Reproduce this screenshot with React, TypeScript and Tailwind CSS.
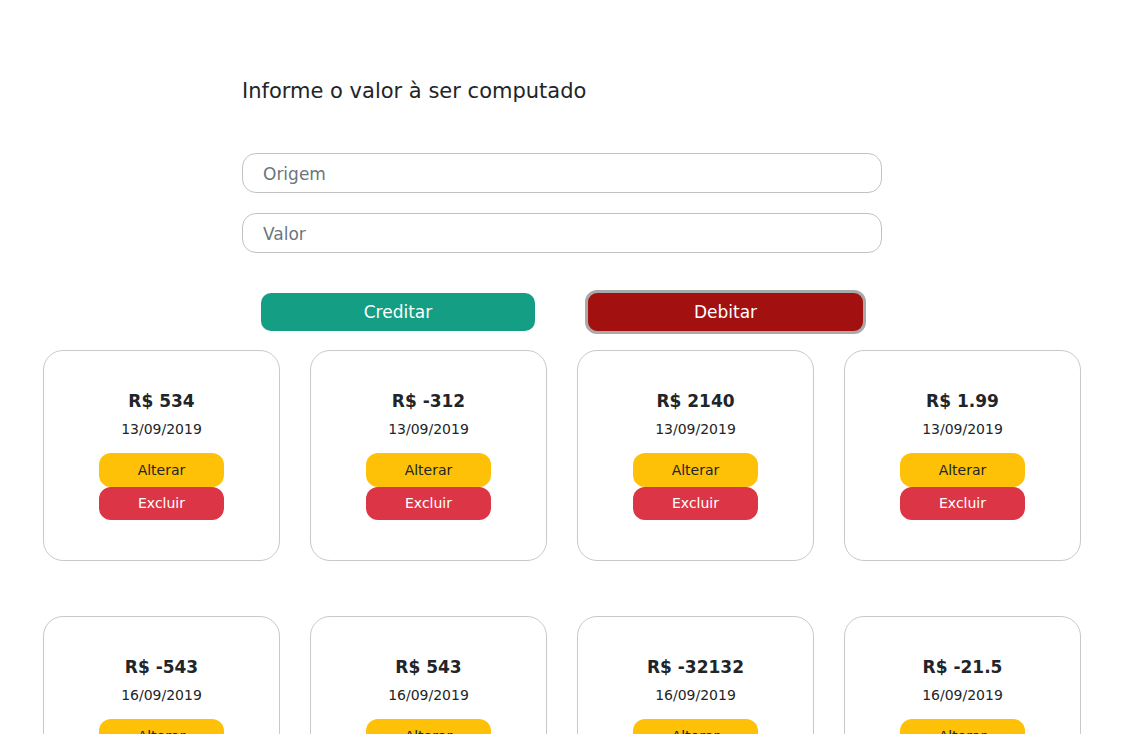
import React, { useState } from "react";

type Lancamento = { valor: string; data: string };

const lancamentos: Lancamento[] = [
  { valor: "534", data: "13/09/2019" },
  { valor: "-312", data: "13/09/2019" },
  { valor: "2140", data: "13/09/2019" },
  { valor: "1.99", data: "13/09/2019" },
  { valor: "-543", data: "16/09/2019" },
  { valor: "543", data: "16/09/2019" },
  { valor: "-32132", data: "16/09/2019" },
  { valor: "-21.5", data: "16/09/2019" },
];

const Card = ({ item }: { item: Lancamento }) => (
  <div className="flex h-[211px] w-[237px] flex-col items-center rounded-[20px] border border-[#c9c9c9] pt-[38px]">
    <p className="text-[17px] font-bold leading-[24px] text-[#212529]">R$ {item.valor}</p>
    <p className="mt-[6px] text-[14px] leading-[20px] text-[#212529]">{item.data}</p>
    <button className="mt-[14px] h-[34px] w-[125px] rounded-[12px] bg-[#ffc107] text-[14px] text-[#212529]">
      Alterar
    </button>
    <button className="h-[33px] w-[125px] rounded-[12px] bg-[#dc3545] text-[14px] text-white">
      Excluir
    </button>
  </div>
);

export default function App() {
  const [origem, setOrigem] = useState("");
  const [valor, setValor] = useState("");

  return (
    <div className="min-h-screen bg-white pt-[76px] pb-10 pl-[2px] font-['DejaVu_Sans',sans-serif] text-[#212529]">
      <div className="mx-auto w-[640px]">
        <h1 className="text-[21px] leading-[30px]">Informe o valor à ser computado</h1>

        <input
          value={origem}
          onChange={(e) => setOrigem(e.target.value)}
          type="text"
          placeholder="Origem"
          className="mt-[47px] block h-[40px] w-full rounded-[14px] border border-[#c2c2c2] px-[20px] pt-[2px] text-[17px] placeholder:text-[#6c757d] focus:outline-none"
        />
        <input
          value={valor}
          onChange={(e) => setValor(e.target.value)}
          type="text"
          placeholder="Valor"
          className="mt-[20px] block h-[40px] w-full rounded-[14px] border border-[#c2c2c2] px-[20px] pt-[2px] text-[17px] placeholder:text-[#6c757d] focus:outline-none"
        />

        <div className="mt-[37px] flex h-[44px] items-center">
          <button className="ml-[19px] h-[38px] w-[274px] rounded-[10px] bg-[#149e84] pt-[1px] text-[17px] text-white">
            Creditar
          </button>
          <button className="ml-[50px] h-[44px] w-[281px] rounded-[12px] border-[3px] border-[#a9a9a9] bg-[#a31010] pt-[1px] text-[17px] text-white">
            Debitar
          </button>
        </div>
      </div>

      <div className="mx-auto mt-[16px] grid w-[1038px] grid-cols-4 gap-x-[30px] gap-y-[55px]">
        {lancamentos.map((item, i) => (
          <Card key={i} item={item} />
        ))}
      </div>
    </div>
  );
}
